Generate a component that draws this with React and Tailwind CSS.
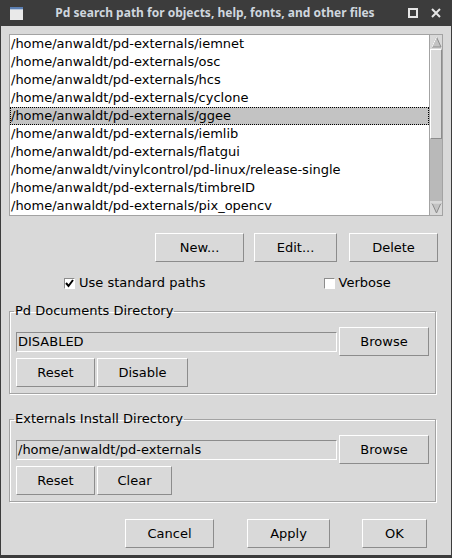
import React from "react";

const paths = [
  "/home/anwaldt/pd-externals/iemnet",
  "/home/anwaldt/pd-externals/osc",
  "/home/anwaldt/pd-externals/hcs",
  "/home/anwaldt/pd-externals/cyclone",
  "/home/anwaldt/pd-externals/ggee",
  "/home/anwaldt/pd-externals/iemlib",
  "/home/anwaldt/pd-externals/flatgui",
  "/home/anwaldt/vinylcontrol/pd-linux/release-single",
  "/home/anwaldt/pd-externals/timbreID",
  "/home/anwaldt/pd-externals/pix_opencv",
];

function Btn({ w, children, className = "" }) {
  return (
    <div
      className={`flex items-center justify-center h-[29px] shrink-0 bg-[#d9d9d9] border border-t-white border-l-white border-r-[#8c8c8c] border-b-[#8c8c8c] text-[13px] text-black ${w} ${className}`}
    >
      {children}
    </div>
  );
}

function Entry({ value }) {
  return (
    <div className="flex items-center h-[20px] w-[321px] border border-t-[#8c8c8c] border-l-[#8c8c8c] border-r-white border-b-white bg-[#d9d9d9] pl-[1px] text-[13px] text-black leading-none">
      {value}
    </div>
  );
}

function Check({ checked }) {
  return (
    <div className="w-[11px] h-[11px] bg-white border border-t-[#8c8c8c] border-l-[#8c8c8c] border-r-white border-b-white flex items-center justify-center">
      {checked && (
        <svg width="9" height="9" viewBox="0 0 9 9">
          <path d="M1 4 L3.5 7 L8 1" stroke="black" strokeWidth="2" fill="none" />
        </svg>
      )}
    </div>
  );
}

function Group({ label, value, second, secondW }) {
  return (
    <fieldset className="ml-[8px] w-[427px] border border-[#a3a3a3] shadow-[inset_1px_1px_0_#fff,1px_1px_0_#fff] px-[6px] pt-[8px] pb-[6px]">
      <legend className="ml-[-2px] px-[1px] text-[13px] leading-[16px] text-black">{label}</legend>
      <div className="flex items-center">
        <Entry value={value} />
        <Btn w="w-[90px]" className="ml-[2px]">Browse</Btn>
      </div>
      <div className="flex mt-[2px]">
        <Btn w="w-[79px]">Reset</Btn>
        <Btn w={secondW} className="ml-[2px]">{second}</Btn>
      </div>
    </fieldset>
  );
}

export default function App() {
  return (
    <div className="w-[452px] h-[558px] bg-[#3c3c3c] flex flex-col font-['DejaVu_Sans',sans-serif] overflow-hidden">
      {/* Title bar */}
      <div className="h-[26px] flex items-center shrink-0">
        <div className="w-[30px] pl-[10px] flex items-center">
          <svg width="13" height="13" viewBox="0 0 13 13">
            <rect x="0" y="0" width="13" height="13" fill="#e9e9e9" />
            <rect x="0" y="0" width="13" height="2" fill="#5b7fb3" />
            <rect x="0" y="2" width="13" height="1" fill="#b8c8de" />
          </svg>
        </div>
        <div className="flex-1 text-center text-[12px] font-bold text-[#cfd6de] font-['Noto_Sans',sans-serif]">
          Pd search path for objects, help, fonts, and other files
        </div>
        <div className="w-[52px] flex items-center">
          <svg width="10" height="10" viewBox="0 0 10 10" className="ml-[8px]">
            <rect x="1" y="1" width="8" height="8" stroke="#e6e6e6" strokeWidth="2" fill="none" />
          </svg>
          <svg width="10" height="10" viewBox="0 0 10 10" className="ml-[13px]">
            <path d="M1 1 L9 9 M9 1 L1 9" stroke="#e6e6e6" strokeWidth="2" />
          </svg>
        </div>
      </div>

      {/* Body */}
      <div className="flex-1 mx-px mb-[3px] bg-[#d9d9d9] flex flex-col">
        {/* List */}
        <div className="mt-[8px] ml-[8px] w-[434px] h-[182px] border border-[#a3a3a3] flex">
          <div className="flex-1 bg-white">
            {paths.map((p, i) => (
              <div
                key={p}
                className={`h-[18px] pl-[1px] flex items-center text-[13px] text-black whitespace-nowrap ${
                  i === 4 ? "bg-[#c3c3c3] outline-1 outline-dotted outline-black -outline-offset-1" : ""
                }`}
              >
                {p}
              </div>
            ))}
          </div>
          {/* Scrollbar */}
          <div className="w-[13px] border-l border-[#a3a3a3] bg-[#c3c3c3] flex flex-col">
            <div className="h-[14px] flex items-center justify-center bg-[#d9d9d9]">
              <svg width="11" height="12" viewBox="0 0 11 12">
                <path d="M5.5 1 L10 11 L1 11 Z" fill="#c3c3c3" stroke="#8c8c8c" strokeWidth="1" />
                <path d="M5.5 1 L1 11" stroke="#fff" strokeWidth="1" />
              </svg>
            </div>
            <div className="h-[90px] bg-[#d9d9d9] border border-t-white border-l-white border-r-[#8c8c8c] border-b-[#8c8c8c]" />
            <div className="flex-1 bg-[#b9b9b9]" />
            <div className="h-[14px] flex items-center justify-center bg-[#d9d9d9]">
              <svg width="11" height="12" viewBox="0 0 11 12">
                <path d="M1 1 L10 1 L5.5 11 Z" fill="#c3c3c3" stroke="#8c8c8c" strokeWidth="1" />
                <path d="M1 1 L10 1" stroke="#fff" strokeWidth="1" />
              </svg>
            </div>
          </div>
        </div>

        {/* Buttons */}
        <div className="mt-[17px] flex justify-end pr-[13px]">
          <Btn w="w-[89px]">New...</Btn>
          <Btn w="w-[83px]" className="ml-[10px]">Edit...</Btn>
          <Btn w="w-[89px]" className="ml-[12px]">Delete</Btn>
        </div>

        {/* Checkboxes */}
        <div className="mt-[13px] h-[16px] flex items-center text-[13px] text-black">
          <div className="ml-[63px] flex items-center">
            <Check checked />
            <span className="ml-[4px]">Use standard paths</span>
          </div>
          <div className="ml-[118px] flex items-center">
            <Check />
            <span className="ml-[4px]">Verbose</span>
          </div>
        </div>

        <div className="mt-[12px]">
          <Group label="Pd Documents Directory" value="DISABLED" second="Disable" secondW="w-[91px]" />
        </div>
        <div className="mt-[17px]">
          <Group label="Externals Install Directory" value="/home/anwaldt/pd-externals" second="Clear" secondW="w-[75px]" />
        </div>

        {/* Bottom buttons */}
        <div className="mt-[17px] flex">
          <Btn w="w-[89px]" className="ml-[124px]">Cancel</Btn>
          <Btn w="w-[83px]" className="ml-[33px]">Apply</Btn>
          <Btn w="w-[65px]" className="ml-[32px]">OK</Btn>
        </div>
      </div>
    </div>
  );
}
